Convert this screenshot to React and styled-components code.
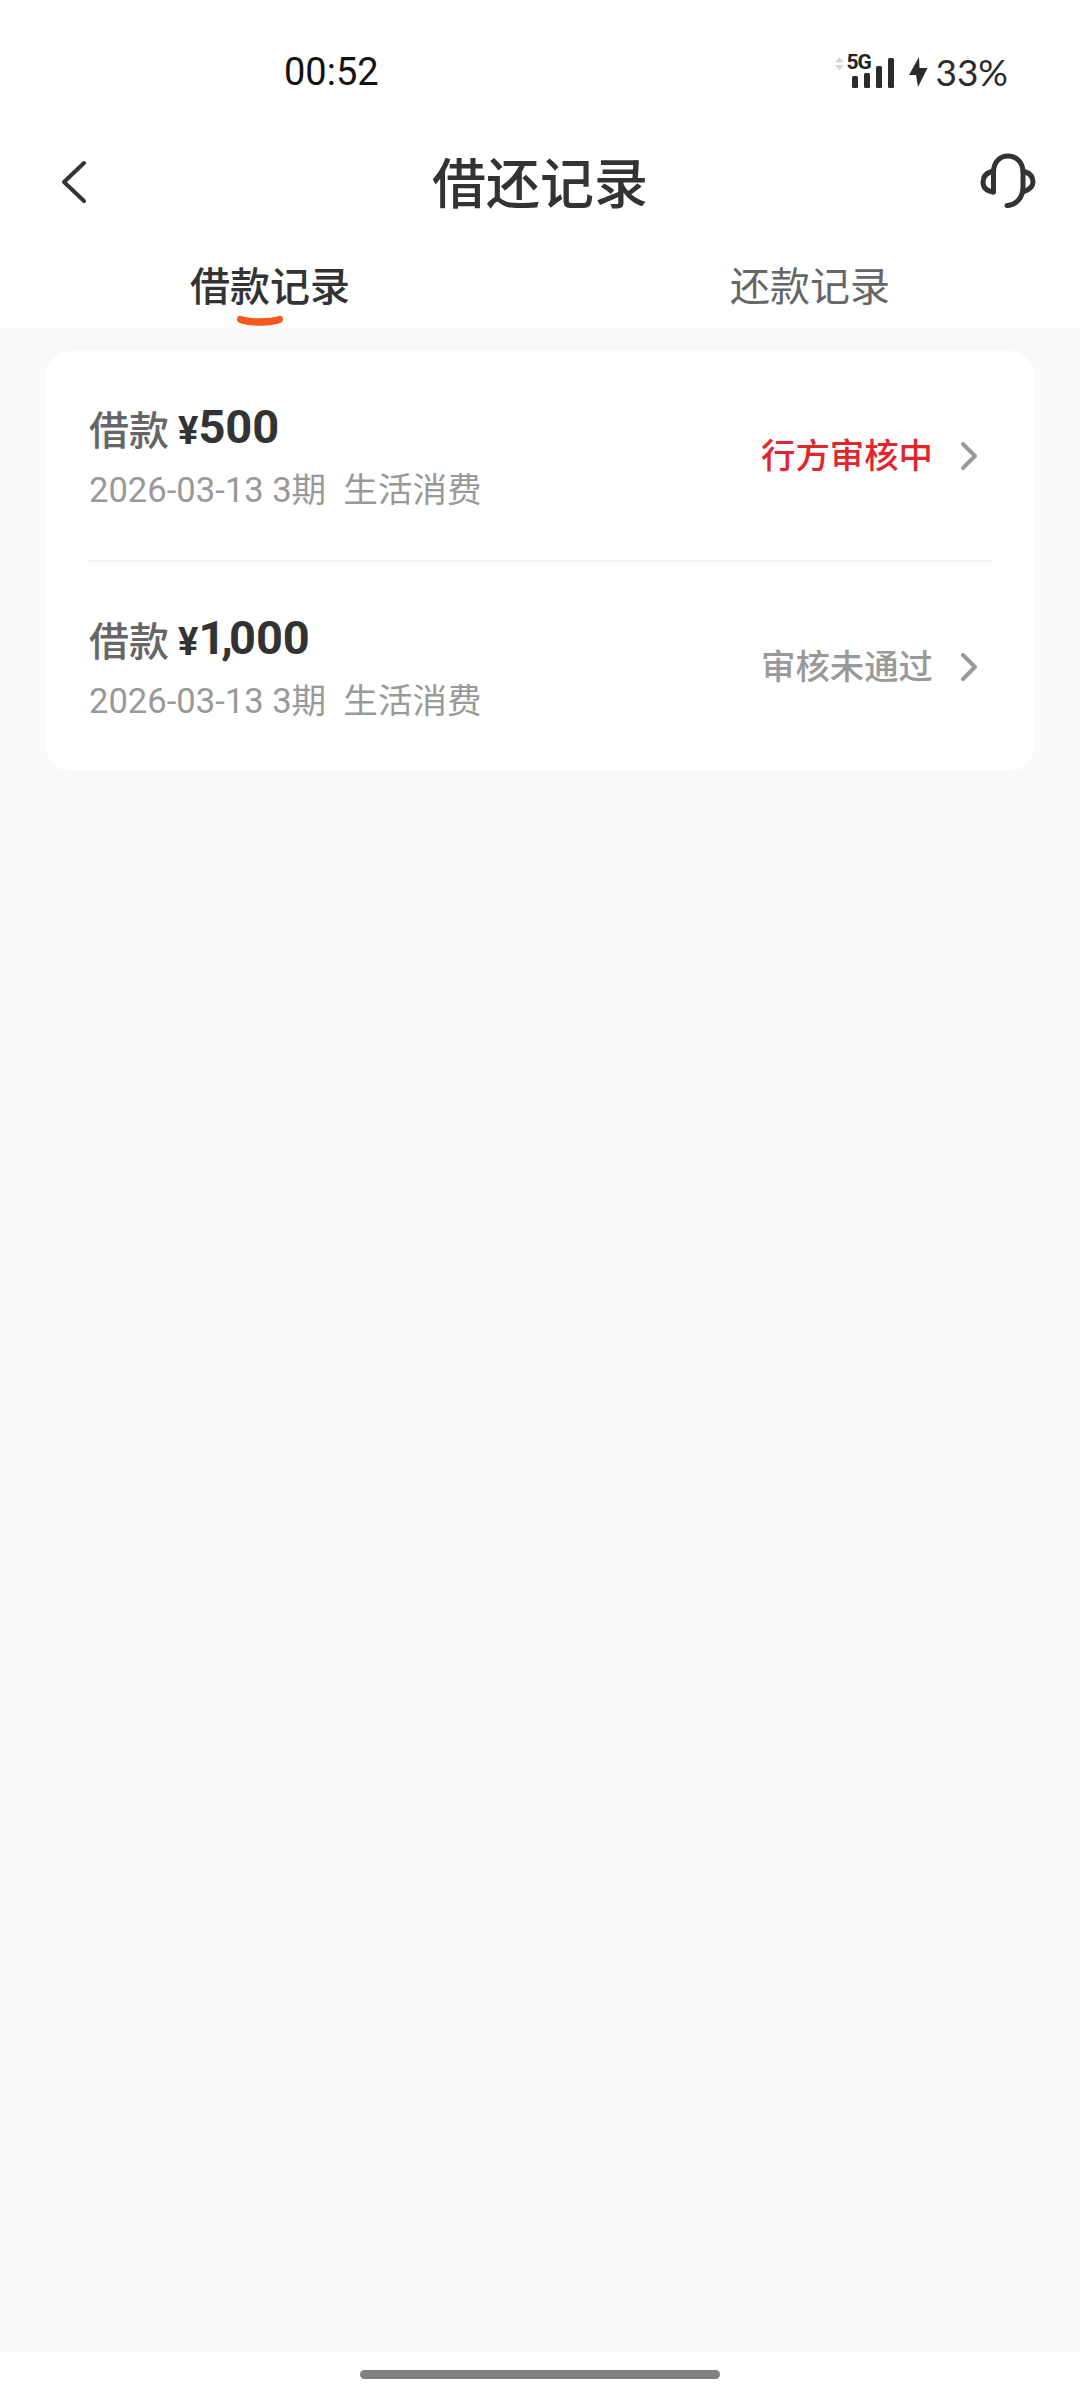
import React from 'react';
import styled, { createGlobalStyle } from 'styled-components';

const GlobalStyle = createGlobalStyle`
  html, body {
    margin: 0;
    padding: 0;
    background: #fff;
  }
  * {
    box-sizing: border-box;
  }
`;

const FONT = `Roboto, "Noto Sans CJK SC", sans-serif`;

const Page = styled.div`
  width: 1080px;
  height: 2400px;
  display: flex;
  flex-direction: column;
  background: #f9f9f9;
  font-family: ${FONT};
  overflow: hidden;
`;

const TopArea = styled.header`
  height: 328px;
  background: #fff;
  display: flex;
  flex-direction: column;
`;

const StatusBar = styled.div`
  height: 114px;
  padding: 50px 72px 0 284px;
  display: flex;
  align-items: flex-start;
  justify-content: space-between;
`;

const Time = styled.span`
  font-size: 38px;
  line-height: 44px;
  color: #111;
`;

const StatusRight = styled.div`
  display: flex;
  align-items: center;
  height: 44px;
`;

const Battery = styled.span`
  font-family: Lato, sans-serif;
  font-size: 37px;
  line-height: 44px;
  color: #2b2b2b;
  margin-left: 7px;
`;

const SignalWrap = styled.div`
  position: relative;
  width: 62px;
  height: 44px;
`;

const FiveG = styled.span`
  position: absolute;
  left: 13px;
  top: 2px;
  font-size: 21px;
  line-height: 20px;
  font-weight: 700;
  letter-spacing: -1px;
  color: #222;
`;

const NavBar = styled.div`
  height: 136px;
  padding: 0 44px;
  display: grid;
  grid-template-columns: 1fr auto 1fr;
  align-items: center;
`;

const NavRight = styled.div`
  justify-self: end;
  display: flex;
`;

const NavLeft = styled.div`
  justify-self: start;
  display: flex;
  padding-left: 16px;
`;

const Title = styled.h1`
  margin: 8px 0 0;
  font-size: 54px;
  line-height: 70px;
  font-weight: 500;
  color: #333;
`;

const Tabs = styled.div`
  position: relative;
  flex: 1;
  display: grid;
  grid-template-columns: 1fr 1fr;
`;

const Tab = styled.div`
  text-align: center;
  font-size: 40px;
  line-height: 54px;
  margin-top: 11px;
  font-weight: ${props => (props.$active ? 500 : 400)};
  color: ${props => (props.$active ? '#333' : '#666')};
`;

const TabMark = styled.svg`
  position: absolute;
  left: 236px;
  top: 65px;
  width: 48px;
  height: 13px;
`;

const Content = styled.main`
  flex: 1;
  padding: 23px 46px 0;
`;

const Card = styled.section`
  background: #fff;
  border-radius: 24px;
  padding: 0 42px;
`;

const Row = styled.div`
  height: ${props => (props.$last ? 209 : 211)}px;
  display: flex;
  align-items: center;
  justify-content: space-between;
  border-bottom: ${props => (props.$last ? 'none' : '2px solid #f3f3f3')};
`;

const RowMain = styled.div`
  display: flex;
  flex-direction: column;
  gap: 8px;
  margin: 0 0 0 1px;
`;

const AmountLine = styled.div`
  display: flex;
  align-items: baseline;
  height: 60px;
`;

const AmountLabel = styled.span`
  font-size: 40px;
  line-height: 60px;
  font-weight: 500;
  color: #666;
  position: relative;
  top: 1px;
`;

const Currency = styled.span`
  font-size: 38px;
  font-weight: 700;
  color: #333;
  margin-left: 9px;
`;

const Amount = styled.span`
  font-size: 47px;
  font-weight: 700;
  color: #333;
  position: relative;
  top: -1px;
`;

const Comma = styled.span`
  margin: 0 -4px;
`;

const Meta = styled.div`
  font-size: 34.6px;
  line-height: 44px;
  color: #999;
  white-space: pre;
`;

const RowSide = styled.div`
  display: flex;
  align-items: center;
  gap: 27px;
  padding-right: 14px;
`;

const Status = styled.span`
  font-size: 34.4px;
  line-height: 44px;
  font-weight: 500;
  color: ${props => (props.$pending ? '#e2252c' : '#999')};
`;

const Footer = styled.footer`
  height: 48px;
  background: #fff;
  display: flex;
  justify-content: center;
  padding-top: 18px;
`;

const HomeBar = styled.div`
  width: 360px;
  height: 9px;
  border-radius: 5px;
  background: #7f7f7f;
`;

const records = [
  { id: 1, amount: ['500'], status: '行方审核中', pending: true },
  { id: 2, amount: ['1', '000'], status: '审核未通过', pending: false },
];

const SignalIcon = () => (
  <SignalWrap>
    <svg width="62" height="44" viewBox="0 0 62 44">
      <path d="M2 12.5 L6.5 7 L11 12.5 Z M2 15 L6.5 20.5 L11 15 Z" fill="#d8d8d8" />
      <rect x="19" y="26" width="6" height="12" rx="1.5" fill="#2b2b2b" />
      <rect x="31" y="23" width="6" height="15" rx="1.5" fill="#2b2b2b" />
      <rect x="43" y="16" width="6" height="22" rx="1.5" fill="#2b2b2b" />
      <rect x="55" y="8" width="6" height="30" rx="1.5" fill="#2b2b2b" />
    </svg>
    <FiveG>5G</FiveG>
  </SignalWrap>
);

const BoltIcon = () => (
  <svg width="20" height="32" viewBox="0 0 20 32" style={{ marginLeft: 13 }}>
    <path d="M11 1 L1 19 H8 L10 31 L19.5 12 H11.5 Z" fill="#2b2b2b" />
  </svg>
);

const BackIcon = () => (
  <svg width="28" height="44" viewBox="0 0 28 44" fill="none">
    <path d="M24 3 L4 22 L24 41" stroke="#333" strokeWidth="4" strokeLinecap="round" strokeLinejoin="round" />
  </svg>
);

const HeadsetIcon = () => (
  <svg width="56" height="58" viewBox="0 0 56 58" fill="none" stroke="#333" strokeWidth="5" strokeLinecap="round">
    <path d="M13.5 39 V19 C13.5 9 20 3 28 3 C36 3 43 9 43 19 V34 C43 45 36 52 27 52.5" />
    <path d="M13 18 C6 20 3 24 3 29 C3 35 7 38 13 39" />
    <path d="M43 18 C50 20 53 24 53 29 C53 34 49 37 43 39" />
  </svg>
);

const ChevronIcon = () => (
  <svg width="18" height="30" viewBox="0 0 18 30" fill="none">
    <path d="M3 3 L15 15 L3 27" stroke="#999" strokeWidth="4" strokeLinecap="round" strokeLinejoin="round" />
  </svg>
);

const App = () => (
  <Page>
    <GlobalStyle />
    <TopArea>
      <StatusBar>
        <Time>00:52</Time>
        <StatusRight>
          <SignalIcon />
          <BoltIcon />
          <Battery>33%</Battery>
        </StatusRight>
      </StatusBar>
      <NavBar>
        <NavLeft>
          <BackIcon />
        </NavLeft>
        <Title>借还记录</Title>
        <NavRight>
          <HeadsetIcon />
        </NavRight>
      </NavBar>
      <Tabs>
        <Tab $active>借款记录</Tab>
        <Tab>还款记录</Tab>
        <TabMark viewBox="0 0 48 13">
          <path d="M5 1 C15 4 33 4 43 1 C47 0 48 5 46 7 C38 12 10 12 2 7 C0 5 1 0 5 1 Z" fill="#f4581c" />
        </TabMark>
      </Tabs>
    </TopArea>
    <Content>
      <Card>
        {records.map((record, index) => (
          <Row key={record.id} $last={index === records.length - 1}>
            <RowMain>
              <AmountLine>
                <AmountLabel>借款</AmountLabel>
                <Currency>¥</Currency>
                <Amount>
                  {record.amount[0]}
                  {record.amount[1] && <Comma>,</Comma>}
                  {record.amount[1]}
                </Amount>
              </AmountLine>
              <Meta>2026-03-13 3期  生活消费</Meta>
            </RowMain>
            <RowSide>
              <Status $pending={record.pending}>{record.status}</Status>
              <ChevronIcon />
            </RowSide>
          </Row>
        ))}
      </Card>
    </Content>
    <Footer>
      <HomeBar />
    </Footer>
  </Page>
);

export default App;
